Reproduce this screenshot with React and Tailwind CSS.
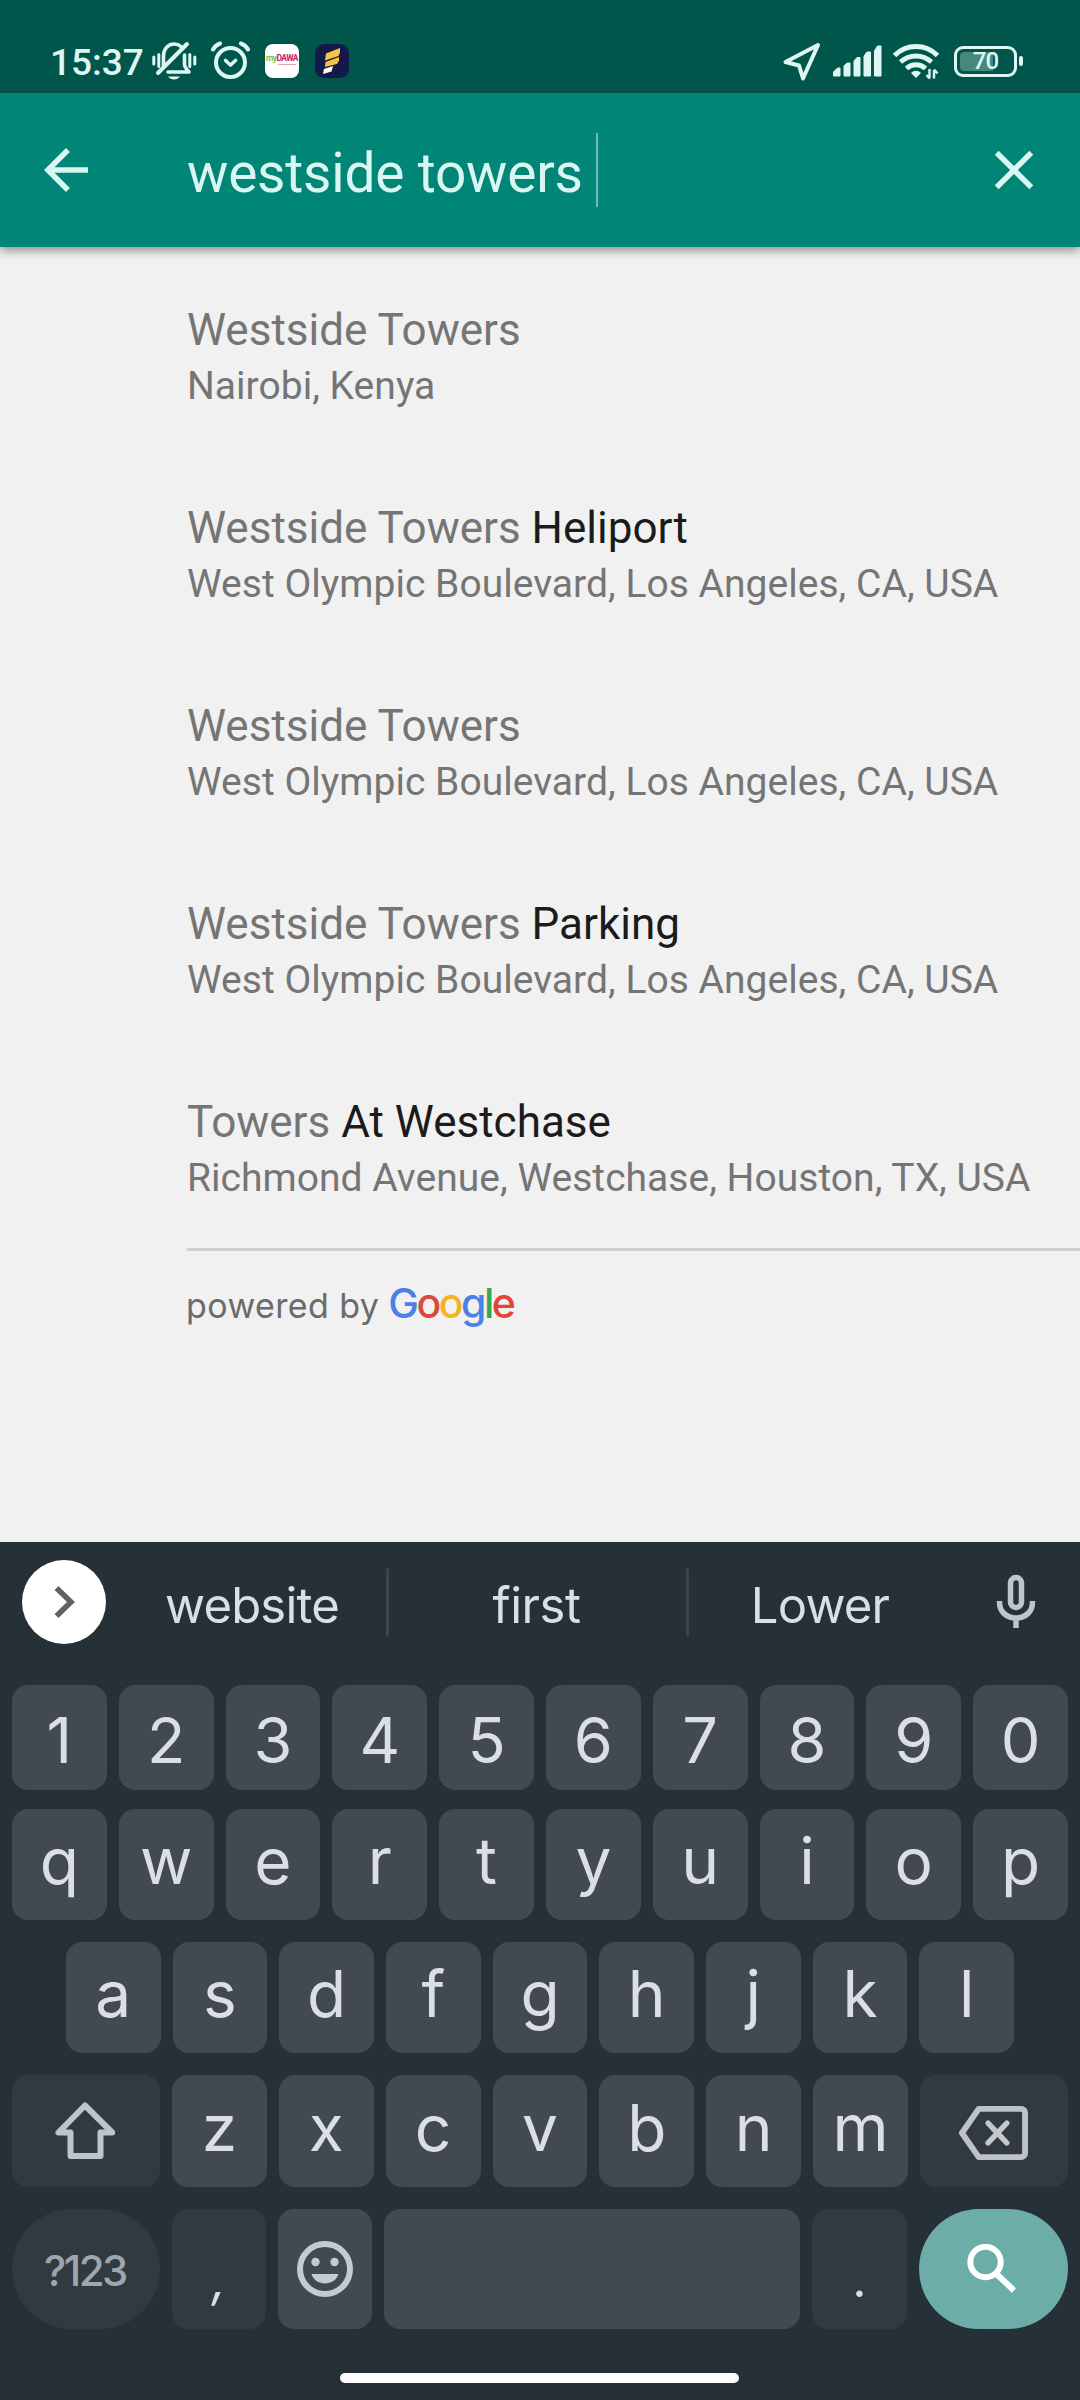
const suggestions = [
  { match: 'Westside Towers', rest: '', address: 'Nairobi, Kenya' },
  { match: 'Westside Towers ', rest: 'Heliport', address: 'West Olympic Boulevard, Los Angeles, CA, USA' },
  { match: 'Westside Towers', rest: '', address: 'West Olympic Boulevard, Los Angeles, CA, USA' },
  { match: 'Westside Towers ', rest: 'Parking', address: 'West Olympic Boulevard, Los Angeles, CA, USA' },
  { match: 'Towers ', rest: 'At Westchase', address: 'Richmond Avenue, Westchase, Houston, TX, USA' },
];

const digitKeys = ['1', '2', '3', '4', '5', '6', '7', '8', '9', '0'];
const topKeys = ['q', 'w', 'e', 'r', 't', 'y', 'u', 'i', 'o', 'p'];
const homeKeys = ['a', 's', 'd', 'f', 'g', 'h', 'j', 'k', 'l'];
const bottomKeys = ['z', 'x', 'c', 'v', 'b', 'n', 'm'];

const StatusBar = () => (
  <div className="flex h-[93px] items-center bg-[#00564a] pt-[29px] pl-[50px] text-[#def7f3]">
    <span className="w-[102px] pt-[2px] text-[37px] leading-none font-medium">15:37</span>

    {/* Silent mode */}
    <svg className="h-[40px] w-[45px]" viewBox="152 41 45 40" fill="none" stroke="currentColor" strokeWidth="3.6" strokeLinecap="round">
      <path d="M153.800 57v7M158.800 54.500v12M189.800 54.500v12M194.800 57v7" strokeWidth="3" />
      <path d="M163.500 66V56c0-7 4.500-12 10.500-12 2.500 0 5 .8 7 2.500" />
      <path d="M184.500 55v9c0 3 1.500 5 4.500 8h-21" strokeLinejoin="round" />
      <path d="M158 73 187 44" strokeWidth="4" />
      <path d="M168 76.500h12c-1.500 2-3.500 3-6 3s-4.500-1-6-3z" fill="currentColor" stroke="none" />
    </svg>

    {/* Alarm */}
    <svg className="ml-[13px] h-[40px] w-[41px]" viewBox="210 41 41 40" fill="none" stroke="currentColor" strokeWidth="4" strokeLinecap="round" strokeLinejoin="round">
      <circle cx="230.500" cy="62.500" r="14.500" />
      <path d="M213 49.500c1.500-3 3.500-4.800 7-6M248 49.500c-1.500-3-3.500-4.800-7-6" />
      <path d="M225.500 60.500l5 4.500 5-4.500" strokeWidth="3.600" />
    </svg>

    {/* MyDawa notification */}
    <div className="ml-[14px] flex h-[34px] w-[34px] flex-col items-center justify-center rounded-[8px] bg-white text-[8.5px] leading-none font-bold tracking-[-0.6px]">
      <div className="-mt-[3px] flex">
        <span className="text-[#8cb63c]">my</span>
        <span className="text-[#c8205f]">DAWA</span>
      </div>
      <div className="mt-px ml-[10px] h-px w-[18px] bg-[#dba6b4]" />
    </div>

    <svg className="ml-[16px] h-[34px] w-[34px]" viewBox="0 0 34 34">
      <rect width="34" height="34" rx="9" fill="#15194a" />
      <path d="M11 9.500 25 4v4.500L23.500 12 10 16.500z" fill="#f9c344" />
      <path d="M10.500 18 24 13v3.500l-2 3.500-12 3z" fill="#f9c344" />
      <path d="M9 25l9-3-1.500 5.500L8 30z" fill="#fff" />
    </svg>

    {/* Location */}
    <svg className="ml-[433px] h-[40px] w-[40px]" viewBox="782 41 40 40" fill="none" stroke="currentColor" strokeWidth="4" strokeLinejoin="round">
      <path d="M818 45 785.500 62 799 65.500l4 13z" />
    </svg>

    {/* Mobile signal */}
    <svg className="ml-[10px] h-[32px] w-[50px]" viewBox="831 45 50 32" fill="currentColor">
      <path d="M832.500 76v-4l4-4h2.500v8zM843 76V66l3-3h3v13zM853 76V61l3-3.500h3V76zM863 76V56l3-4h3.500v24zM873.500 76V51l3-5h3.500v30z" stroke="currentColor" strokeWidth="1" strokeLinejoin="round" />
    </svg>

    {/* Wi-Fi */}
    <svg className="ml-[10px] h-[38px] w-[48px]" viewBox="892 42 48 38" fill="none" stroke="currentColor" strokeWidth="5">
      <path d="M894.500 55.500c12-12 31-12 43 0M900.500 62c9-8 22-8 31 0M906.500 68.500c5.500-5 13.500-5 19 0" />
      <path d="M911 73c3-3 7-3 10 0L916 78z" fill="currentColor" stroke="none" />
      <path d="M929.500 69v9.500M926.500 75l3 3.500M934 78.500V70M937.500 73.500l-3.500-4" strokeWidth="2.400" />
    </svg>

    {/* Battery */}
    <div className="relative ml-[14px] flex h-[31px] w-[63px] items-center justify-center rounded-[9px] border-[3px] border-[#def7f3]">
      <div className="absolute top-[3px] left-[3px] h-[19px] w-[33px] rounded-l-[4px] bg-[#47877c]" />
      <span className="relative text-[24px] leading-none font-medium tracking-[-1px]">70</span>
    </div>
    <div className="ml-[2px] h-[10px] w-[4px] rounded-[2px] bg-[#def7f3]" />
  </div>
);

const SearchBar = () => (
  <header className="relative z-10 flex h-[154px] items-center bg-[#008577] pl-[33px] text-[#d9f6f2] shadow-[0_3px_10px_rgba(60,40,45,0.55)]">
    <svg className="h-[66px] w-[66px]" viewBox="0 0 24 24" fill="currentColor">
      <path d="M20 11H7.830l5.590-5.590L12 4l-8 8 8 8 1.410-1.410L7.830 13H20v-2z" />
    </svg>
    <div className="ml-[88px] flex items-center">
      <span className="pt-[7px] text-[55px] leading-none tracking-[-0.2px] whitespace-pre">westside towers </span>
      <div className="h-[74px] w-[2px] bg-[#6fbdb3]" />
    </div>
    <svg className="mr-[33px] ml-auto h-[66px] w-[66px]" viewBox="0 0 24 24" fill="currentColor">
      <path d="M19 6.410 17.590 5 12 10.590 6.410 5 5 6.410 10.590 12 5 17.590 6.410 19 12 13.410 17.590 19 19 17.590 13.410 12z" />
    </svg>
  </header>
);

const Suggestion = ({ match, rest, address }) => (
  <li className="whitespace-pre text-[#757575]">
    <div className="text-[44px] leading-[52px]">
      {match}
      <span className="text-[#1b1b1b]">{rest}</span>
    </div>
    <div className="text-[39px] leading-[61px] tracking-[0.03px]">{address}</div>
  </li>
);

const PoweredByGoogle = () => (
  <div className="flex items-baseline pt-[30px] font-[Inter] leading-[44px]">
    <span className="-ml-px text-[34px] tracking-[0.4px] text-[#6b6b6b]">powered by</span>
    <span className="ml-[9px] text-[41px] font-medium tracking-[-2.5px]">
      <span className="text-[#4a80e8]">G</span>
      <span className="text-[#d94a3d]">o</span>
      <span className="text-[#f2b51d]">o</span>
      <span className="text-[#4a80e8]">g</span>
      <span className="text-[#34a853]">l</span>
      <span className="text-[#e2453a]">e</span>
    </span>
  </div>
);

const Key = ({ children, className = 'flex-1 pb-[7px] text-[64px]', dim = false }) => (
  <div className={`flex h-full items-center justify-center rounded-[16px] leading-none ${dim ? 'bg-[#303a40]' : 'bg-[#424a50]'} ${className}`}>
    {children}
  </div>
);

const Keyboard = () => (
  <section className="h-[858px] bg-[#263137] font-[Inter] text-[#dadfe6]">
    {/* Word suggestions */}
    <div className="flex h-[120px] items-center text-[49px]">
      <div className="ml-[22px] flex h-[84px] w-[84px] items-center justify-center rounded-full bg-white">
        <svg className="ml-[2px] h-[34px] w-[22px]" viewBox="0 0 22 34" fill="none" stroke="#616161" strokeWidth="5.500">
          <path d="M2.500 3 17 17 2.500 31" />
        </svg>
      </div>
      <span className="w-[280px] pt-[7px] pl-[12px] text-center tracking-[-0.8px]">website</span>
      <div className="h-[68px] w-[3px] rounded-full bg-[#3b454b]" />
      <span className="w-[297px] pt-[7px] pr-[2px] text-center tracking-[-0.5px]">first</span>
      <div className="h-[68px] w-[3px] rounded-full bg-[#3b454b]" />
      <span className="w-[262px] pt-[7px] text-center tracking-[-0.8px]">Lower</span>
      <svg className="ml-[44px] h-[56px] w-[42px]" viewBox="0 0 42 56" fill="none" stroke="#c0c5c9" strokeWidth="5.500">
        <rect x="15.500" y="3.500" width="11" height="30" rx="5.500" />
        <path d="M4.500 27v1.500c0 9 7 15.500 16.500 15.500s16.500-6.500 16.500-15.500V27M21 44v10" />
      </svg>
    </div>

    <div className="flex flex-col px-[12px] pt-[23px]">
      <div className="flex h-[105px] gap-3">
        {digitKeys.map((key) => (
          <Key key={key} className="flex-1 pt-[5px] text-[63px]">{key}</Key>
        ))}
      </div>
      <div className="mt-[19px] flex h-[111px] gap-3">
        {topKeys.map((key) => (
          <Key key={key}>{key}</Key>
        ))}
      </div>
      <div className="mt-[22px] flex h-[111px] gap-3 px-[54px]">
        {homeKeys.map((key) => (
          <Key key={key}>{key}</Key>
        ))}
      </div>
      <div className="mt-[22px] flex h-[112px] gap-3">
        <Key dim className="w-[148px]">
          <svg className="h-[62px] w-[64px]" viewBox="0 0 64 62" fill="none" stroke="#bfc3cb" strokeWidth="6" strokeLinejoin="round">
            <path d="M31 5.500 4.500 32.500H16.500V56h30V32.500h11.700z" />
          </svg>
        </Key>
        {bottomKeys.map((key) => (
          <Key key={key}>{key}</Key>
        ))}
        <Key dim className="w-[148px]">
          <svg className="mt-[4px] mr-[2px] h-[56px] w-[71px]" viewBox="0 0 72 56" fill="none" stroke="#bfc1c9" strokeWidth="6" strokeLinejoin="round">
            <path d="M21 3.500h43a4 4 0 0 1 4 4v41a4 4 0 0 1-4 4H21L4 28z" />
            <path d="M30.500 18l19 20M49.500 18l-19 20" strokeWidth="5.500" strokeLinecap="round" stroke="#c5c9cb" />
          </svg>
        </Key>
      </div>
      <div className="mt-[22px] flex h-[120px] gap-3">
        <div className="flex w-[148px] items-center justify-center rounded-[60px] bg-[#303a40] pt-[3px] pr-[2px] text-[42px] leading-none font-medium tracking-[-2.5px] text-[#9fa5af]">
          ?123
        </div>
        <Key dim className="w-[94px] pt-[20px] text-[50px]">
          <span className="italic">,</span>
        </Key>
        <Key className="w-[94px]">
          <svg className="h-[58px] w-[58px]" viewBox="0 0 58 58" fill="none">
            <circle cx="29" cy="29" r="25" stroke="#c3cad3" strokeWidth="6" />
            <circle cx="19.500" cy="22" r="4.200" fill="#c3cad3" />
            <circle cx="38.500" cy="22" r="4.200" fill="#c3cad3" />
            <path d="M15.500 34h27c-2 6-7 9.500-13.500 9.500S17.500 40 15.500 34z" fill="#c3cad3" />
          </svg>
        </Key>
        <Key className="flex-1" />
        <Key dim className="w-[95px] pt-[20px] text-[50px]">.</Key>
        <div className="flex w-[149px] items-center justify-center rounded-[60px] bg-[#6dada8] pr-[4px]">
          <svg className="h-[50px] w-[50px]" viewBox="0 0 50 50" fill="none" stroke="#fff" strokeWidth="6">
            <circle cx="18.500" cy="18" r="15.200" />
            <path d="M29.500 30 47 46.500" />
          </svg>
        </div>
      </div>
      <div className="mt-[44px] mr-px h-[10px] w-[399px] self-center rounded-full bg-white" />
    </div>
  </section>
);

const App = () => {
  return (
    <div className="flex h-[2400px] w-[1080px] flex-col overflow-hidden bg-[#f1f1f1] font-[Roboto]">
      <StatusBar />
      <SearchBar />
      <main className="flex-1 pt-[57px] pl-[187px]">
        <ul className="flex flex-col gap-[85px]">
          {suggestions.map((item, index) => (
            <Suggestion key={index} {...item} />
          ))}
        </ul>
        <div className="mt-[39px] h-[3px] bg-[#cfcfcf]" />
        <PoweredByGoogle />
      </main>
      <Keyboard />
    </div>
  );
};

export default App;
